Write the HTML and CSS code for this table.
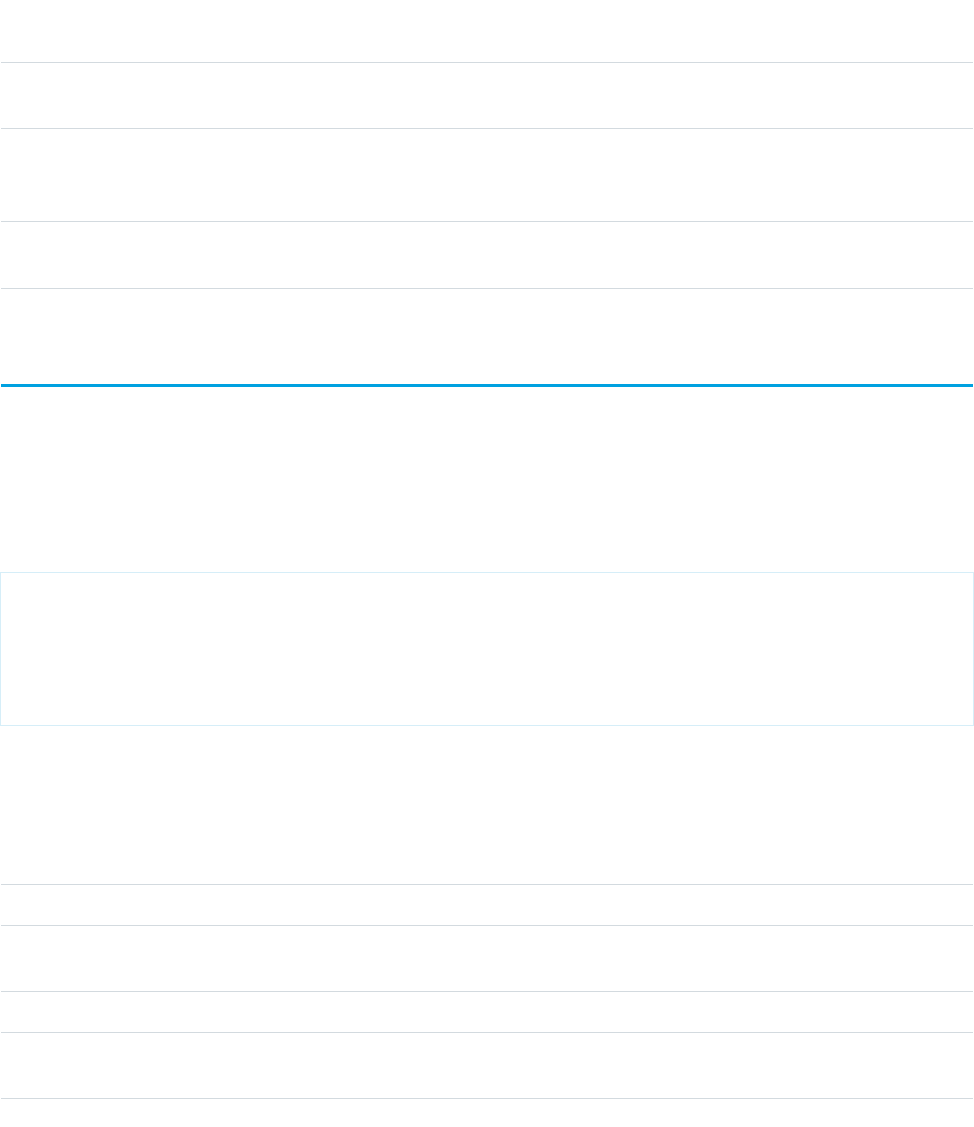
FILE: index.html
```html
<!DOCTYPE html>
<html lang="en">
<head>
<meta charset="utf-8">
<title>Reference</title>
<link rel="stylesheet" href="styles.css">
</head>
<body>
<div class="page">
  <div class="rows rows-top">
    <div class="row h63"></div>
    <div class="row h66"></div>
    <div class="row h93"></div>
    <div class="row h67"></div>
  </div>
  <div class="accent"></div>
  <div class="note"></div>
  <div class="rows rows-bottom">
    <div class="row h41"></div>
    <div class="row h66"></div>
    <div class="row h41"></div>
    <div class="row h66"></div>
  </div>
</div>
</body>
</html>
```
FILE: styles.css
```css
html, body {
  margin: 0;
  padding: 0;
  background: #ffffff;
  font-family: "Liberation Sans", Arial, sans-serif;
}
.page {
  width: 974px;
  display: flex;
  flex-direction: column;
}
.rows {
  margin: 0 1px 0 1px;
  display: flex;
  flex-direction: column;
}
.row {
  box-sizing: border-box;
  border-bottom: 1px solid #d3dadf;
}
.rows-bottom {
  margin-top: 158px;
  border-top: 1px solid #d3dadf;
}
.h41 { height: 41px; }
.h63 { height: 63px; }
.h66 { height: 66px; }
.h67 { height: 67px; }
.h93 { height: 93px; }
.accent {
  margin: 95px 1px 0 1px;
  height: 3px;
  background: #00a1e0;
}
.note {
  box-sizing: border-box;
  margin-top: 185px;
  height: 154px;
  border: 1px solid #d6eef8;
}
```
